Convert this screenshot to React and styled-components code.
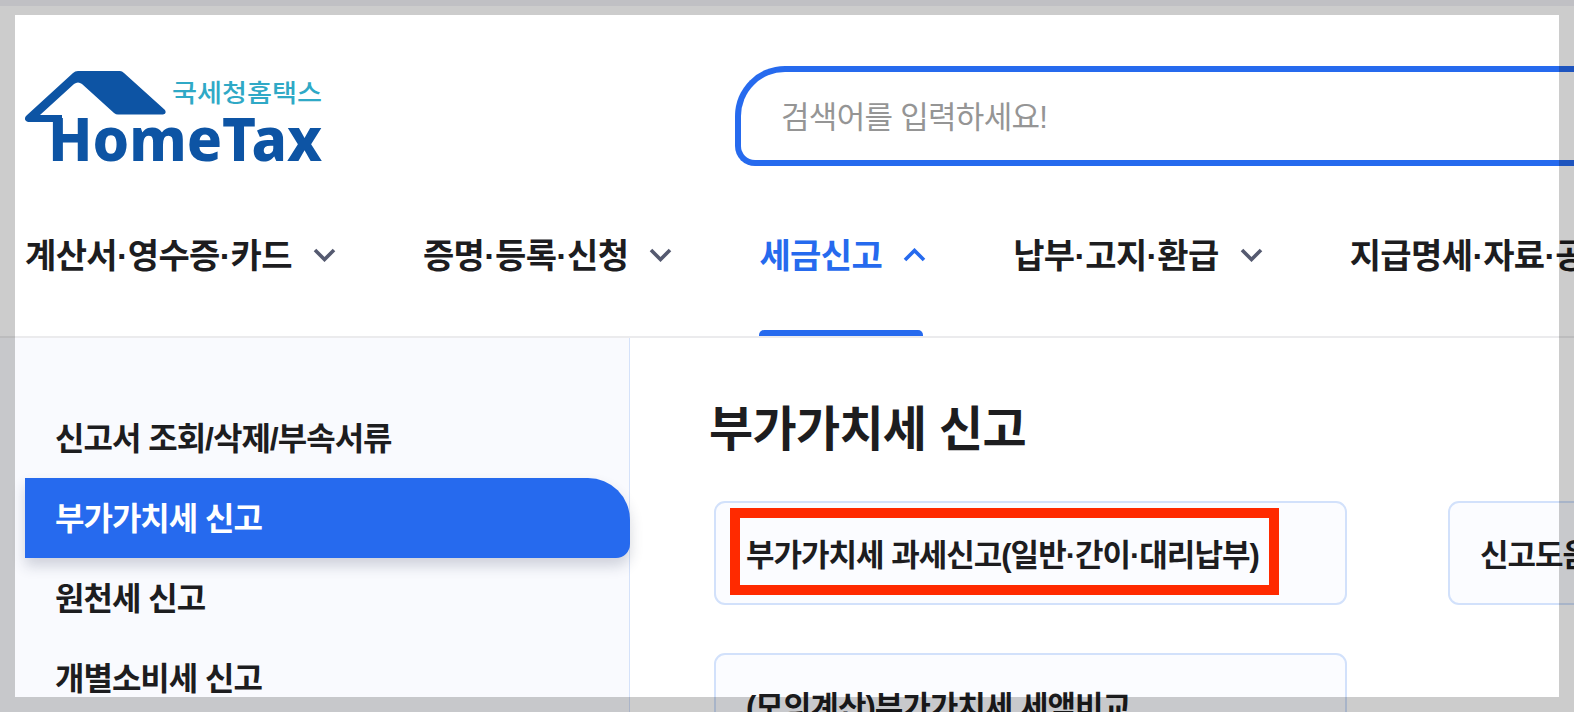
import styled, { createGlobalStyle } from "styled-components";

const GlobalStyle = createGlobalStyle`
    * {
        box-sizing: border-box;
    }
    html, body {
        margin: 0;
        padding: 0;
        background: #FFFFFF;
        overflow: hidden;
    }
    body {
        font-family: "Liberation Sans", "Noto Sans CJK KR", sans-serif;
        color: #1D1D1F;
    }
`;

const Page = styled.div`
    position: relative;
    width: 1574px;
    height: 712px;
    overflow: hidden;
`;

const TopStrip = styled.div`
    height: 6px;
    background: #F0F0F5;
`;

const Frame = styled.div`
    position: absolute;
    inset: 0;
    border: 15px solid rgba(0, 0, 0, 0.2);
    pointer-events: none;
    z-index: 5;
`;

const TopRow = styled.header`
    display: flex;
    padding: 60px 0 0 25px;
    height: 160px;
`;

const Logo = styled.svg`
    flex: none;
    width: 310px;
    height: 100px;
    font-family: "Noto Sans", "Noto Sans CJK KR", sans-serif;
`;

const SearchBox = styled.div`
    flex: none;
    display: flex;
    align-items: center;
    width: 1000px;
    height: 100px;
    margin-left: 400px;
    padding: 0 0 4px 40px;
    border: 6px solid #266AEE;
    border-right: none;
    border-radius: 50px 0 0 20px;
    font-size: 31px;
    letter-spacing: -0.7px;
    color: #959595;
`;

const Nav = styled.nav`
    display: flex;
    gap: 87px;
    height: 172px;
    padding-left: 25px;
    border-bottom: 2px solid #EBEBED;
    white-space: nowrap;
`;

const NavItem = styled.div`
    position: relative;
    flex: none;
    display: flex;
    align-items: center;
    gap: 21px;
    height: 170px;
    padding-top: 4px;
    font-size: 34px;
    font-weight: 700;
    letter-spacing: -0.6px;
    color: ${(p) => (p.$active ? "#266AEE" : "#1D1D1F")};

    &::after {
        content: "";
        display: ${(p) => (p.$active ? "block" : "none")};
        position: absolute;
        left: 0;
        right: 3px;
        bottom: 0;
        height: 6px;
        border-radius: 5px 5px 0 0;
        background: #266AEE;
    }
`;

const Chevron = styled.svg`
    flex: none;
    width: 23px;
    height: 14px;
    margin-top: 4px;
`;

const Content = styled.div`
    display: flex;
    height: 374px;
`;

const Sidebar = styled.aside`
    flex: none;
    width: 630px;
    padding: 60px 0 0 25px;
    background: #F9FAFE;
    border-right: 1px solid #D5E2FA;
`;

const SideItem = styled.div`
    display: flex;
    align-items: center;
    width: 605px;
    height: 80px;
    padding: 0 0 4px 30px;
    font-size: 32px;
    font-weight: 700;
    letter-spacing: -1px;
    color: ${(p) => (p.$active ? "#FFFFFF" : "#1D1D1F")};
    background: ${(p) => (p.$active ? "#266AEE" : "transparent")};
    border-radius: ${(p) => (p.$active ? "0 42px 14px 0" : "0")};
    box-shadow: ${(p) => (p.$active ? "0 8px 14px rgba(40, 50, 80, 0.2)" : "none")};
`;

const Main = styled.main`
    flex: none;
    width: 944px;
    padding: 60px 0 0 79px;
`;

const Title = styled.h1`
    margin: 0;
    height: 70px;
    line-height: 64px;
    font-size: 48px;
    font-weight: 700;
    letter-spacing: -0.7px;
`;

const CardGrid = styled.div`
    display: grid;
    grid-template-columns: 633px 633px;
    grid-auto-rows: 104px;
    gap: 48px 101px;
    margin: 33px 0 0 5px;
`;

const Card = styled.div`
    position: relative;
    display: flex;
    align-items: center;
    padding: 0 0 2px 30px;
    background: #FBFCFF;
    border: 2px solid #D2E1FB;
    border-radius: 11px;
    font-size: 31px;
    font-weight: 700;
    letter-spacing: -1px;
    white-space: nowrap;
`;

const RedBox = styled.div`
    position: absolute;
    left: 14px;
    top: 5px;
    width: 549px;
    height: 87px;
    border: 10px solid #FF2A00;
`;

function Arrow({ up, color }) {
    return (
        <Chevron viewBox="0 0 23 14" fill="none" stroke={color} strokeWidth="3.6">
            <path d={up ? "M2 12 L11.5 2.5 L21 12" : "M2 2 L11.5 11.5 L21 2"} />
        </Chevron>
    );
}

const navItems = [
    { label: "계산서·영수증·카드" },
    { label: "증명·등록·신청" },
    { label: "세금신고", active: true },
    { label: "납부·고지·환급" },
    { label: "지급명세·자료·공개" },
];

const sideItems = [
    { label: "신고서 조회/삭제/부속서류" },
    { label: "부가가치세 신고", active: true },
    { label: "원천세 신고" },
    { label: "개별소비세 신고" },
];

export default function App() {
    return (
        <Page>
            <GlobalStyle />
            <TopStrip />
            <TopRow>
                <Logo viewBox="25 66 310 100">
                    <path
                        fill="#0D54A4"
                        d="M26 116 L73 73 Q75 71 78 71 L120 71 Q122 71 124 73 L165 110 Q167 114 163 114.5 L118 114.5 Q116 114.5 114 113 L82 84 Q78 81 74 84 L40 115 L62 115 L62 122 L28 122 Q23 120 26 116 Z"
                    />
                    <text x="48" y="161" fontSize="61" fontWeight="800" fill="#0D54A4" textLength="274" lengthAdjust="spacingAndGlyphs">HomeTax</text>
                    <text x="172" y="102" fontSize="25" fontWeight="500" fill="#2FA9C6" textLength="150" lengthAdjust="spacingAndGlyphs" fontFamily="'Noto Sans CJK KR', sans-serif">국세청홈택스</text>
                </Logo>
                <SearchBox>검색어를 입력하세요!</SearchBox>
            </TopRow>
            <Nav>
                {navItems.map((item) => (
                    <NavItem key={item.label} $active={item.active}>
                        {item.label}
                        <Arrow up={item.active} color={item.active ? "#266AEE" : "#555A70"} />
                    </NavItem>
                ))}
            </Nav>
            <Content>
                <Sidebar>
                    {sideItems.map((item) => (
                        <SideItem key={item.label} $active={item.active}>{item.label}</SideItem>
                    ))}
                </Sidebar>
                <Main>
                    <Title>부가가치세 신고</Title>
                    <CardGrid>
                        <Card>
                            부가가치세 과세신고(일반·간이·대리납부)
                            <RedBox />
                        </Card>
                        <Card>신고도움자료 조회</Card>
                        <Card>(모의계산)부가가치세 세액비교</Card>
                    </CardGrid>
                </Main>
            </Content>
            <Frame />
        </Page>
    );
}
